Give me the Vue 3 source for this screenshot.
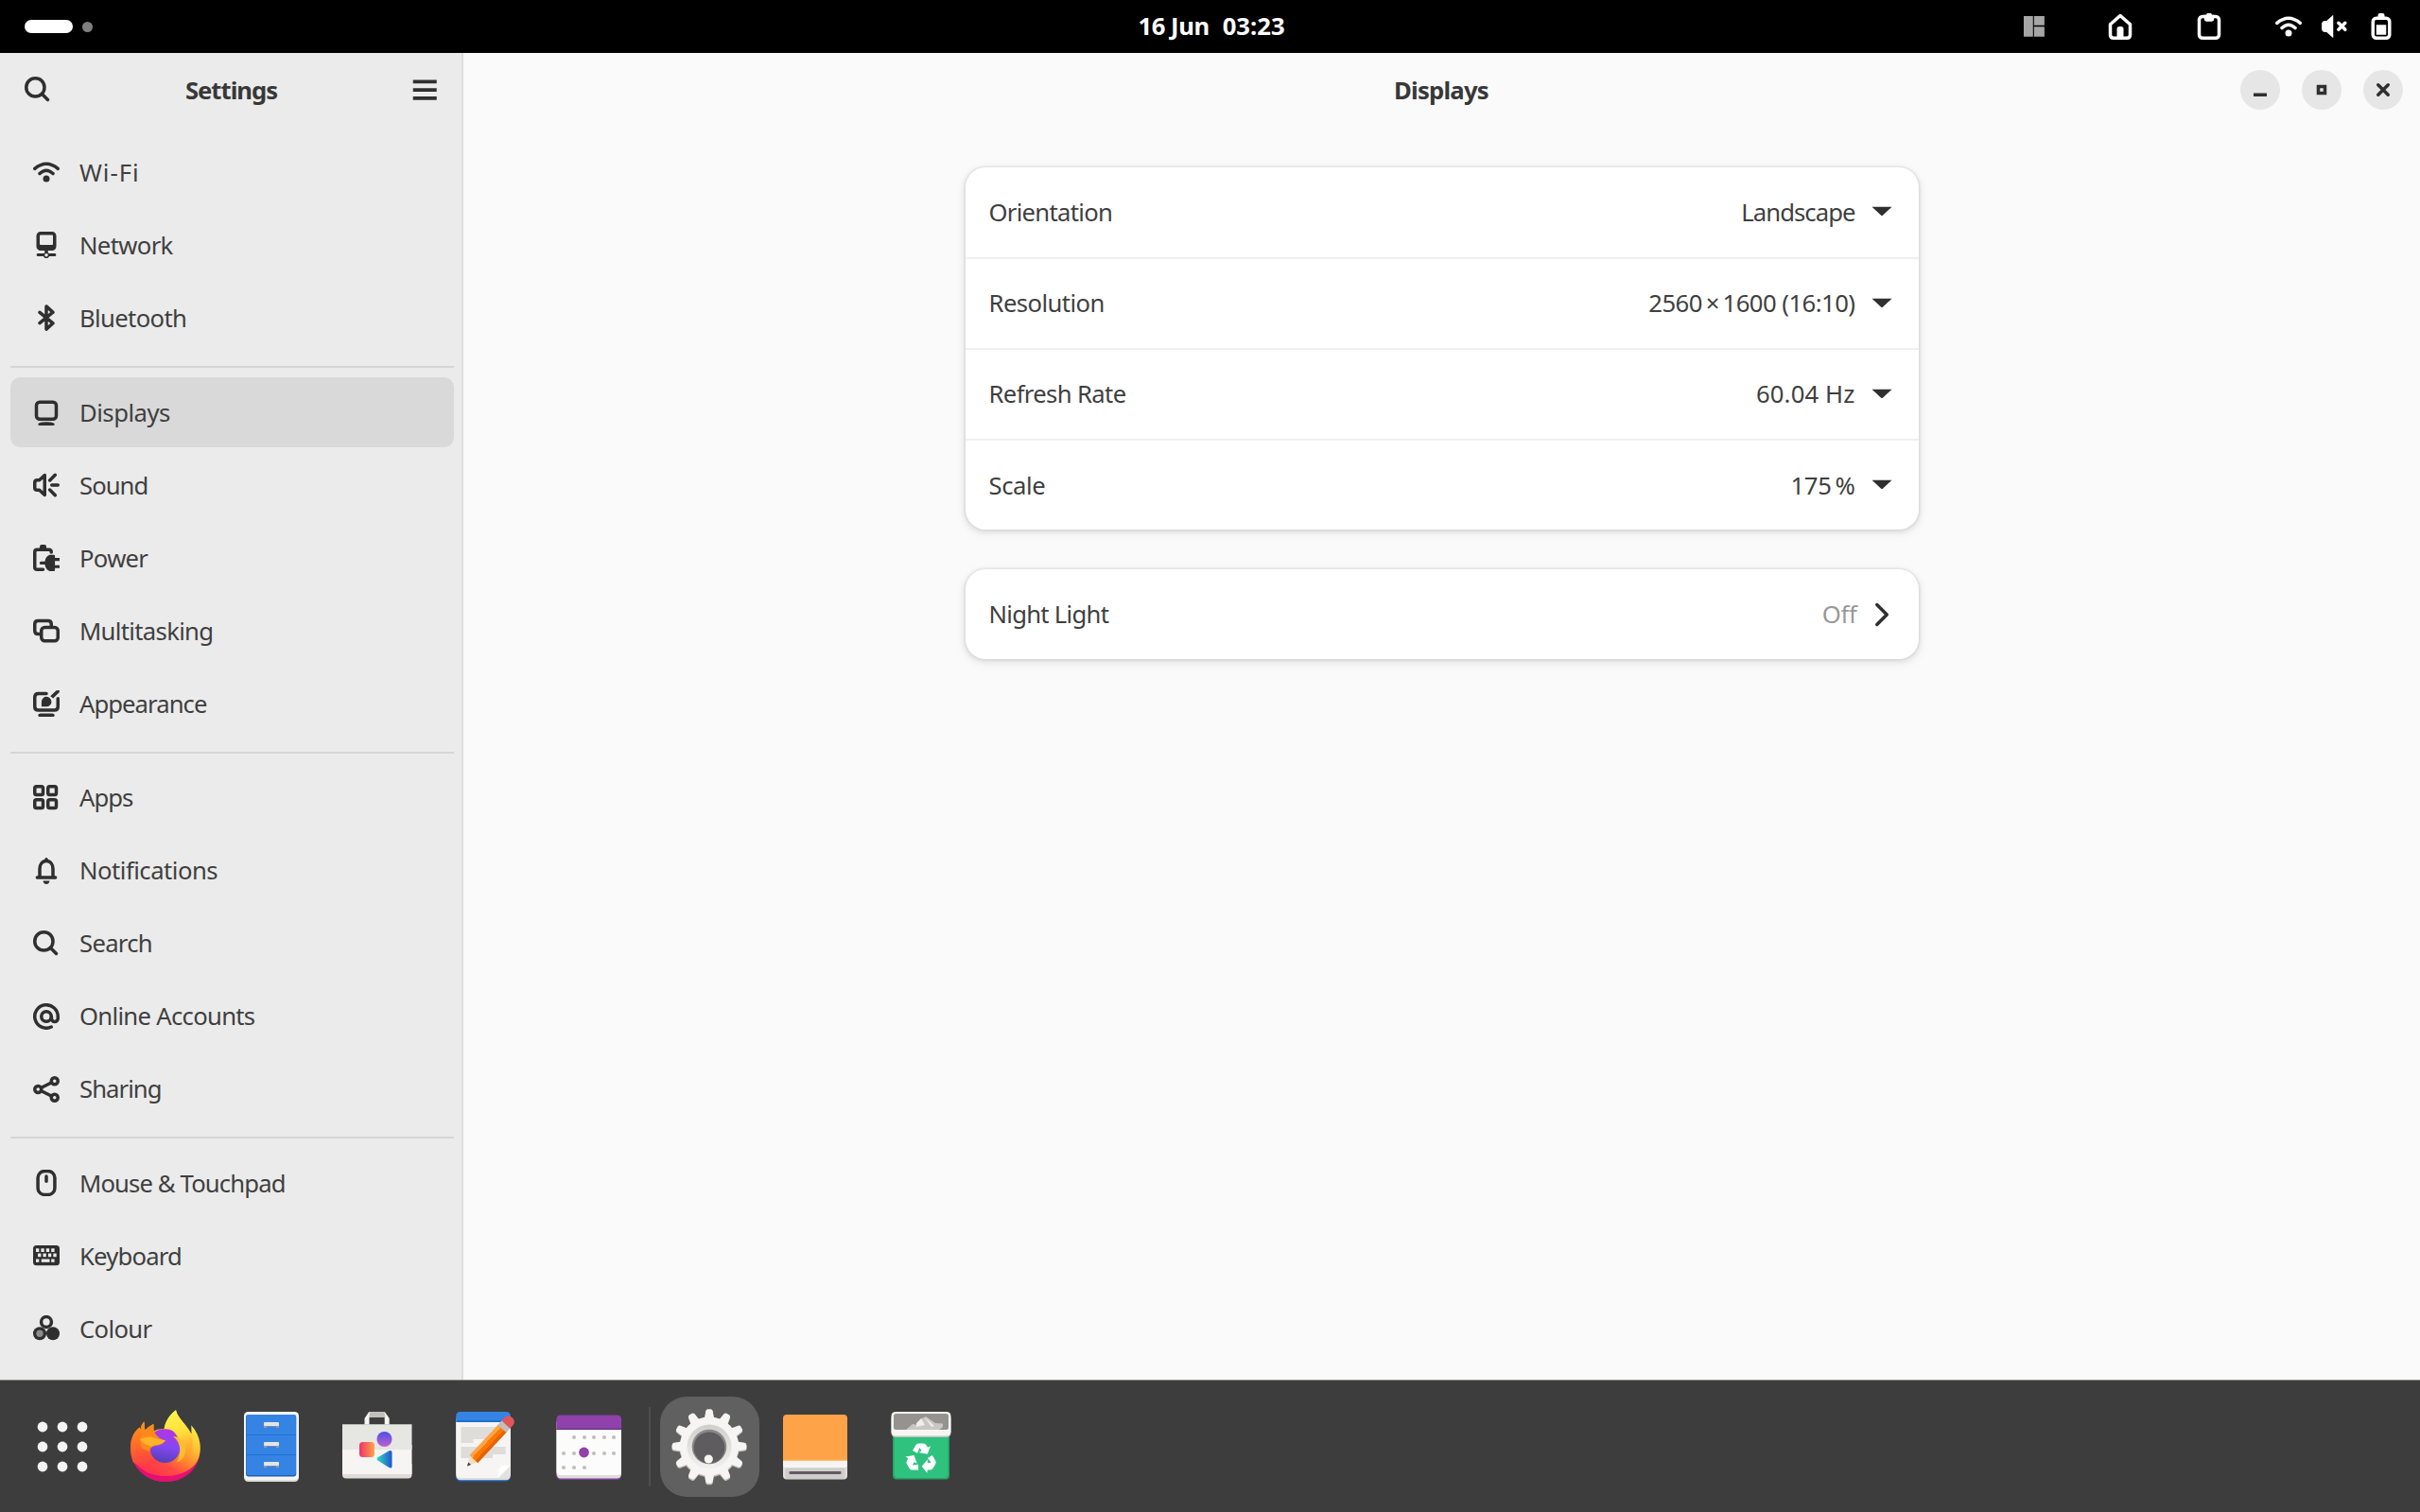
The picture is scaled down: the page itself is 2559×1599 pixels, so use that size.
<script setup>
// "ls" is the tracking, in px, of each label
const groups = [
  [
    { name: 'Wi-Fi', icon: 'wifi', ls: 1 },
    { name: 'Network', icon: 'network', ls: -0.65 },
    { name: 'Bluetooth', icon: 'bluetooth', ls: -0.65 },
  ],
  [
    { name: 'Displays', icon: 'display', ls: -0.5, active: true },
    { name: 'Sound', icon: 'sound', ls: -0.95 },
    { name: 'Power', icon: 'power', ls: -0.7 },
    { name: 'Multitasking', icon: 'multitasking', ls: -0.68 },
    { name: 'Appearance', icon: 'appearance', ls: -0.95 },
  ],
  [
    { name: 'Apps', icon: 'apps', ls: -0.95 },
    { name: 'Notifications', icon: 'bell', ls: -0.5 },
    { name: 'Search', icon: 'search', ls: -0.7 },
    { name: 'Online Accounts', icon: 'at', ls: -0.7 },
    { name: 'Sharing', icon: 'share', ls: -0.95 },
  ],
  [
    { name: 'Mouse & Touchpad', icon: 'mouse', ls: -0.87 },
    { name: 'Keyboard', icon: 'keyboard', ls: -0.8 },
    { name: 'Colour', icon: 'colour', ls: -0.65 },
  ],
]

const rows = [
  { label: 'Orientation', ls: -0.72, value: 'Landscape', vls: -0.95 },
  { label: 'Resolution', ls: -0.56, value: '2560\u2009×\u20091600 (16:10)', vls: -0.53 },
  { label: 'Refresh Rate', ls: -0.64, value: '60.04 Hz', vls: 0.15 },
  { label: 'Scale', ls: -0.4, value: '175\u2009%', vls: -0.3 },
]

const teeth = Array.from({ length: 12 }, (_, i) => i * 30)
const keys = [
  [1.7, 3.6], [4.8, 3.6], [7.9, 3.6], [11, 3.6],
  [2.9, 6.6], [6, 6.6], [9.1, 6.6], [12.2, 6.6],
]
const calDots = [
  [31, 31], [42, 31], [52, 31], [63, 31], [73, 31],
  [20, 48], [31, 48], [52, 48], [63, 48], [73, 48],
  [20, 63], [31, 63], [42, 63],
]
</script>

<template>
  <div class="desktop">
    <!-- shared symbolic icons -->
    <svg class="defs" width="0" height="0">
      <defs>
        <symbol id="wifi" viewBox="0 0 16 16">
          <path class="s" d="M1 5.9Q8 .1 15 5.9M4 8.9Q8 5.1 12 8.9" />
          <circle cx="8" cy="12" r="2" />
        </symbol>
        <symbol id="network" viewBox="0 0 16 16">
          <path fill-rule="evenodd" d="M4.5 0h7A2.5 2.5 0 0 1 14 2.5v6.4a2.5 2.5 0 0 1-2.5 2.5H9v1.4a1.7 1.7 0 0 1 .7.4h3.6a.9.9 0 0 1 0 1.7H9.7a1.8 1.8 0 0 1-3.4 0H2.7a.9.9 0 0 1 0-1.7h3.6a1.7 1.7 0 0 1 .7-.4v-1.4H4.5A2.5 2.5 0 0 1 2 8.9V2.5A2.5 2.5 0 0 1 4.5 0zM4.6 2a.6.6 0 0 0-.6.6v4.8c0 .4.2.6.6.6h6.8c.4 0 .6-.2.6-.6V2.6a.6.6 0 0 0-.6-.6zM8 13.2a1 1 0 1 0 0 2 1 1 0 0 0 0-2z" />
        </symbol>
        <symbol id="bluetooth" viewBox="0 0 16 16">
          <path class="s" d="M4 4.8l8 6.5L8 14.9V1.1l4 3.6-8 6.5" />
        </symbol>
        <symbol id="display" viewBox="0 0 16 16">
          <rect class="s" x="2" y="1.9" width="12" height="10.3" rx="2" />
          <path d="M3 15.2C3 14.3 5 13.8 8 13.8s5 .5 5 1.4c0 .5-.3.8-.8.8H3.8c-.5 0-.8-.3-.8-.8z" />
        </symbol>
        <symbol id="sound" viewBox="0 0 16 16">
          <path class="s" d="M1 6.5Q1 5 2.5 5H3.8L7 2v12L3.8 11H2.5Q1 11 1 9.5z" />
          <path class="s" d="M10.1 5.1l3.2-3.2M11.3 8H15M10.1 10.9l3.2 3.2" />
        </symbol>
        <symbol id="power" viewBox="0 0 16 16">
          <path class="s" d="M11 4.6Q11 3 9.5 3h-7Q1 3 1 4.5v9Q1 15 2.5 15H6" />
          <path d="M4 2.5V1.2Q4 0 5.2 0h1.7Q8 0 8 1.2v1.3zM10 6.2h2.500q.7 0 .7.700V8H16v1.800h-2.800v2.600H16v1.800h-2.800v1.100q0 .7-.7.700H10Q7.600 15 7.100 12H4.800a.9.900 0 0 1 0-1.800h2.300Q7.600 7 10 6.200z" />
        </symbol>
        <symbol id="multitasking" viewBox="0 0 16 16">
          <rect class="s" x="5" y="6" width="10" height="8.200" rx="2" />
          <path class="s" d="M4 10H3Q1 10 1 8V4Q1 2 3 2h6Q11 2 11 4v1" />
        </symbol>
        <symbol id="appearance" viewBox="0 0 16 16">
          <path class="s" d="M8 2H3.200Q1 2 1 4.200v5.600Q1 12 3.200 12h9.600q2.200 0 2.200-2.200V5" />
          <path d="M5.100 9.900V6.800a3 3 0 1 1 3 3.100zM10.400 3.600L14 .2 16 0l-.1 1.200-3.800 3.600zM3 15.200c0-.9 1-1.200 1.800-1.200h6.400c.8 0 1.800.3 1.800 1.200 0 .5-.3.800-.8.800H3.800c-.5 0-.8-.3-.8-.8z" />
        </symbol>
        <symbol id="apps" viewBox="0 0 16 16">
          <rect class="s" x="1" y="1" width="5" height="5" rx="1" />
          <rect class="s" x="9" y="1" width="5" height="5" rx="1" />
          <rect class="s" x="1" y="9" width="5" height="5" rx="1" />
          <rect class="s" x="9" y="9" width="5" height="5" rx="1" />
        </symbol>
        <symbol id="bell" viewBox="0 0 16 16">
          <path class="s" d="M2.500 12h11M4 12V6.800C4 4.200 5.500 2 8 2s4 2.200 4 4.800V12" />
          <path d="M6.500 2.500L7 .8Q8-.7 9 .8l.5 1.700zM6 14h4q-.4 2-2 2t-2-2z" />
        </symbol>
        <symbol id="search" viewBox="0 0 16 16">
          <circle class="s" cx="6.500" cy="6.500" r="5.500" />
          <path class="s" d="M10.600 10.600L14 14" />
        </symbol>
        <symbol id="at" viewBox="0 0 16 16">
          <circle class="s" cx="8" cy="8" r="3" />
          <path class="s" d="M11 14.300A7 7 0 1 1 15 8v1.200a1.900 1.900 0 0 1-3.900 0V8" />
        </symbol>
        <symbol id="share" viewBox="0 0 16 16">
          <circle class="s" cx="3" cy="8" r="2" />
          <circle class="s" cx="13" cy="3" r="2" />
          <circle class="s" cx="13" cy="13" r="2" />
          <path class="s" d="M5 7l6-3M5 9l6 3" />
        </symbol>
        <symbol id="mouse" viewBox="0 0 16 16">
          <rect class="s" x="2.900" y=".9" width="10.200" height="14.200" rx="4" />
          <rect x="7" y="3" width="2" height="5" rx="1" />
        </symbol>
        <symbol id="keyboard" viewBox="0 0 16 16">
          <rect y="1.700" width="16" height="12.200" rx="2" />
          <g class="paper">
            <rect v-for="k in keys" :key="k.join()" :x="k[0]" :y="k[1]" width="1.900" height="2.100" />
            <rect x="1.700" y="10" width="1.900" height="1.900" />
            <rect x="5" y="10" width="5" height="1.900" />
            <rect x="11" y="10" width="1.900" height="1.900" />
          </g>
        </symbol>
        <symbol id="colour" viewBox="0 0 16 16">
          <circle class="s" cx="8" cy="4" r="3.100" />
          <circle cx="4" cy="11" r="4" />
          <circle cx="12" cy="11" r="4" />
          <circle cx="4" cy="11" r="2.100" fill="#8d8d8d" />
        </symbol>
      </defs>
    </svg>

    <header class="topbar">
      <div class="workspaces"><i class="pill"></i><i class="dot"></i></div>
      <div class="clock"><span class="day">16 Jun</span><span>03:23</span></div>
      <div class="tray">
        <svg class="ic tile" viewBox="0 0 16 16"><path fill="#a6a6a6" d="M1.700 1.700h5.600v12.500H1.700zM7.900 1.700h6.300v5.600H7.900zM7.900 8.100h6.300v6.100H7.900z" /></svg>
        <svg class="ic home" viewBox="0 0 16 16"><path class="s" d="M2 6.700L8 1.400l6 5.300V13q0 2-2 2H4q-2 0-2-2z" /><path d="M6 15.500V9.600Q6 8 7.600 8h.8Q10 8 10 9.600v5.900z" /></svg>
        <svg class="ic clip" viewBox="0 0 16 16"><rect class="s" x="2" y="2" width="12" height="13" rx="2" /><path d="M5 1h1.200L6.800 0h2.400L9.800 1H11v2.600Q11 5 9.600 5H6.400Q5 5 5 3.600z" /></svg>
        <svg class="ic wi"><use href="#wifi" /></svg>
        <svg class="ic mute" viewBox="0 0 16 16"><path d="M0 7Q0 4.600 2.200 4.600H3L7 1v14l-4-3.600h-.8Q0 11.400 0 9z" /><path class="s" d="M10.200 5.900l4 4M14.200 5.900l-4 4" /></svg>
        <svg class="ic" viewBox="0 0 16 16"><rect class="s" x="3" y="3" width="10" height="12" rx="2" /><path d="M6 2.500V1.200Q6 0 7.200 0h1.600Q10 0 10 1.200v1.300zM5 7h6v6H5z" /></svg>
      </div>
    </header>

    <div class="window">
      <aside class="sidebar">
        <div class="bar">
          <svg class="ic"><use href="#search" /></svg>
          <h1 class="title st">Settings</h1>
          <svg class="ic" viewBox="0 0 16 16"><path d="M1 2h14.300v2.100H1zM1 7h14.300v2.100H1zM1 12h14.300v2.100H1z" /></svg>
        </div>
        <nav>
          <ul v-for="(g, i) in groups" :key="i">
            <li v-for="it in g" :key="it.name" :class="{ active: it.active }">
              <svg class="ic"><use :href="'#' + it.icon" /></svg>
              <span :style="{ letterSpacing: it.ls + 'px' }">{{ it.name }}</span>
            </li>
          </ul>
        </nav>
      </aside>

      <main>
        <div class="bar">
          <h1 class="title dt">Displays</h1>
          <div class="controls">
            <button><svg class="ic" viewBox="0 0 16 16"><path d="M4 10h8v2H4z" /></svg></button>
            <button><svg class="ic" viewBox="0 0 16 16"><path fill-rule="evenodd" d="M5 5h6v6H5zM7 7v2h2V7z" /></svg></button>
            <button><svg class="ic" viewBox="0 0 16 16"><path class="s" d="M5 5l6 6M11 5l-6 6" /></svg></button>
          </div>
        </div>
        <div class="content">
          <section class="card">
            <div v-for="r in rows" :key="r.label" class="row">
              <span :style="{ letterSpacing: r.ls + 'px' }">{{ r.label }}</span>
              <span class="value" :style="{ letterSpacing: r.vls + 'px' }">{{ r.value }}</span>
              <svg class="ic" viewBox="0 0 16 16"><path d="M2 5h12L8.500 10.200q-.5.400-1 0z" /></svg>
            </div>
          </section>
          <section class="card">
            <div class="row">
              <span class="nl">Night Light</span>
              <span class="value off">Off</span>
              <svg class="ic" viewBox="0 0 16 16"><path class="s" d="M5 2l6 6-6 6" /></svg>
            </div>
          </section>
        </div>
      </main>
    </div>

    <footer class="dock">
      <svg class="app grid" viewBox="0 0 84 84">
        <g fill="#f4f4f4">
          <template v-for="y in [21, 42, 63]" :key="y"><circle v-for="x in [21, 42, 63]" :key="x" :cx="x" :cy="y" r="5.400" /></template>
        </g>
      </svg>

      <svg class="app" viewBox="0 0 84 84">
        <defs>
          <linearGradient id="ffBody" x1=".82" y1=".15" x2=".3" y2=".95">
            <stop offset="0" stop-color="#fff14a" /><stop offset=".28" stop-color="#ffc233" /><stop offset=".5" stop-color="#ff8a2e" /><stop offset=".72" stop-color="#ff4a42" /><stop offset="1" stop-color="#ff3050" />
          </linearGradient>
          <linearGradient id="ffFlame" x1=".3" y1="0" x2=".5" y2="1">
            <stop offset="0" stop-color="#fff44f" /><stop offset=".45" stop-color="#ffe03c" /><stop offset=".75" stop-color="#ffb030" /><stop offset="1" stop-color="#ff8a2e" stop-opacity="0" />
          </linearGradient>
          <linearGradient id="ffFace" x1=".2" y1="0" x2=".3" y2="1">
            <stop offset="0" stop-color="#ff9a14" /><stop offset=".45" stop-color="#ff7224" /><stop offset="1" stop-color="#ff3c46" />
          </linearGradient>
          <linearGradient id="ffGlobe" x1=".6" y1="0" x2=".4" y2="1">
            <stop offset="0" stop-color="#b833e1" /><stop offset=".5" stop-color="#8547f5" /><stop offset="1" stop-color="#5340b4" />
          </linearGradient>
        </defs>
        <path fill="url(#ffBody)" d="M19.300 15.300L20.300 24.500Q24 20.500 29.300 18l.3 7.500Q34 22.500 40.500 23.500C42 14 47 8 53 3.300 55 12 64 18 69.500 28.500L69.300 19.300C76 27 78.800 35 78.800 43.500 78.800 63 62.500 79 42 79S5 63 5 43.500C5 34 8 27 14.500 21.500q.7 1 .8 2.500Q16 19 19.300 15.300z" />
        <path fill="url(#ffFlame)" d="M40.500 23.500C42 14 47 8 53 3.300 55 12 64 18 69 29 73 41 69 54 61 60L56 54 58 36z" />
        <path fill="#e2077a" opacity=".85" d="M5.500 50C10 64 24 73 42 73s31-8 35.800-20C74 69 60 79 42 79S9 67 5.500 50z" />
        <path fill="url(#ffFace)" d="M19.300 15.300L20.300 24.500Q24 20.500 29.300 18l.3 7.500 6 4L32 59Q20 68 7.500 58 5 51 5 43.500C5 34 8 27 14.500 21.500q.7 1 .8 2.500Q16 19 19.300 15.300z" />
        <path fill="url(#ffGlobe)" d="M27.500 31C29.500 26 35 23.300 42 23.300 48.500 23.300 52 26.500 54 30.500 56.500 34 57.600 38 57.600 42.500 57.600 52 50.500 59 41.500 59S25.500 52 25.500 43z" />
        <path fill="#ffbd30" d="M50 31.500C57 30 62 38 63 45 63 53 59 57 53.500 58.500 57.600 53 58.500 46 56.500 40.500 55 36 53.500 33.500 50 31.500z" />
        <path fill="#ff8a1c" d="M19.500 24L29.600 25.500C32 30 36 34.500 42 35.300 40 39 36 40.300 31 41 27.500 42 25.500 43.500 25.500 47L17 44 14.700 34.300z" />
        <path fill="#ffb42a" d="M14.700 34.300Q24 30 29.600 32.500 36 34.500 42 35.300 40 38.500 35 39.500 30 40 27.500 41.500 20 40.500 14.700 34.300z" />
      </svg>

      <svg class="app" viewBox="0 0 84 84">
        <rect x="13" y="8" width="58" height="71" rx="4.500" fill="#deddda" />
        <rect x="13" y="5" width="58" height="72" rx="4.500" fill="#f6f5f4" />
        <rect x="15" y="8" width="53.300" height="65.500" rx="3" fill="#1a5fb4" />
        <rect x="15.400" y="8" width="52.500" height="64" rx="2.500" fill="#3584e4" />
        <path fill="#1c71d8" d="M15.400 29h52.500v1H15.400zM15.400 50h52.500v1H15.400z" />
        <g v-for="y in [16, 37, 58]" :key="y">
          <path fill="#9a9996" :d="`M34 ${y + 3}h16v3h-3v-1.500H37v1.500h-3z`" />
          <rect x="34" :y="y" width="16" height="4" rx="1" fill="#e6e5e3" />
        </g>
      </svg>

      <svg class="app" viewBox="0 0 84 84">
        <defs>
          <linearGradient id="swR"><stop offset="0" stop-color="#ed336b" /><stop offset="1" stop-color="#ffa348" /></linearGradient>
          <linearGradient id="swP" x2="0" y2="1"><stop offset="0" stop-color="#4a4fe8" /><stop offset="1" stop-color="#c061cb" /></linearGradient>
          <linearGradient id="swT"><stop offset="0" stop-color="#33d7bf" /><stop offset="1" stop-color="#1f56d0" /></linearGradient>
        </defs>
        <path fill="#f6f5f4" d="M28.500 18.500V12L33 5.300h17L54.700 12v6.500h-5V11H33.500v7.500z" />
        <path fill="#c0bfbc" d="M34 5.300h15.500l.7 5.700H33.500z" />
        <path fill="#deddda" d="M5 60h73.500v11.500q0 4-4 4H9q-4 0-4-4z" />
        <path fill="#f6f5f4" d="M5 40h73.500v31H5z" />
        <path fill="#e6e6e2" d="M5 18.300h73.500V45H5z" />
        <rect x="23" y="37" width="16" height="16" rx="3.500" fill="url(#swR)" />
        <circle cx="49.500" cy="34" r="8" fill="url(#swP)" />
        <path fill="url(#swT)" d="M42 53.500Q41 55 42 56.300L54.500 64q3 1.300 3-1.500V48q0-2.800-3-1.700z" />
      </svg>

      <svg class="app" viewBox="0 0 84 84">
        <defs><linearGradient id="pen" x1="0" y1="0" x2="1" y2="0"><stop offset=".33" stop-color="#ffa348" /><stop offset=".33" stop-color="#ff7800" /><stop offset=".7" stop-color="#ff7800" /><stop offset=".7" stop-color="#e66100" /></linearGradient></defs>
        <rect x="13.300" y="10" width="57.500" height="68.700" rx="4.500" fill="#1a5fb4" />
        <rect x="13.300" y="9" width="57.500" height="68.300" rx="4.500" fill="#deddda" />
        <path fill="#f6f5f4" d="M13.300 15h57.500v55q0 5-4 5h-49.500q-4 0-4-5z" />
        <path fill="#3584e4" d="M17.800 5h48.500q4.500 0 4.500 4.500V14.500H13.300V9.500Q13.300 5 17.800 5z" />
        <path fill="#1c71d8" d="M13.300 14h57.500v2H13.300z" />
        <path fill="#deddda" d="M18.500 21h42v13h-29v4h-13zM18.500 42H65.500v8H52v4H18.500z" />
        <path fill="#fff" d="M58 75q-.5-12 5-13h7.800z" /><path fill="#e3e2e0" d="M70.800 62L58 75h9q3.800-.5 3.800-5z" />
        <g transform="translate(25 62.500) rotate(43)">
          <path fill="#3d3846" d="M-2 -4L0 0 2 -4z" /><path fill="#f0e0c0" d="M-5.500 -11L-1.900 -4h3.800L5.500 -11z" />
          <rect x="-6" y="-56" width="12" height="46" fill="url(#pen)" />
          <rect x="-6" y="-61" width="12" height="7" fill="#c0bfbc" />
          <path fill="#e2555a" d="M-6 -60v-4q0-6 6-6t6 6v4z" />
        </g>
      </svg>

      <svg class="app" viewBox="0 0 84 84">
        <rect x="7.500" y="12" width="68.500" height="65" rx="4.500" fill="#813d9c" />
        <rect x="7.500" y="12" width="68.500" height="63.500" rx="4.500" fill="#deddda" />
        <path fill="#fcfcfc" d="M7.500 24h68.500v44q0 4-4 4H11.500q-4 0-4-4z" />
        <path fill="#9141ac" d="M12 8.500h59.500q4.500 0 4.500 4.500v10.500H7.500V13q0-4.500 4.500-4.500z" />
        <path fill="#613583" d="M7.500 22.700h68.500V24H7.500z" />
        <circle v-for="d in calDots" :key="d.join()" :cx="d[0] - 5" :cy="d[1] + 1" r="2.100" fill="#c0bfbc" />
        <circle cx="36.500" cy="48" r="5.400" fill="#9141ac" />
      </svg>

      <i class="sep"></i>

      <div class="app running">
        <svg viewBox="0 0 84 84">
          <defs><linearGradient id="rim" x2="0" y2="1"><stop offset="0" stop-color="#d0cfcc" /><stop offset="1" stop-color="#f2f1f0" /></linearGradient></defs>
          <g fill="#c0bfbc" transform="translate(0 1.200)">
            <path v-for="a in teeth" :key="a" :transform="`rotate(${a} 42 41.500)`" d="M37 12l1.300-8q.4-2 2.200-2h3q1.800 0 2.200 2L47 12z" />
            <circle cx="42" cy="41.500" r="31.500" />
          </g>
          <g fill="#f6f5f4">
            <path v-for="a in teeth" :key="a" :transform="`rotate(${a} 42 41.500)`" d="M37 12l1.300-7.800q.4-2 2.200-2h3q1.800 0 2.200 2L47 12z" />
            <circle cx="42" cy="41.500" r="31" />
          </g>
          <circle cx="42" cy="42" r="23.500" fill="url(#rim)" />
          <circle cx="42" cy="42" r="18.300" fill="#8a8986" />
          <circle cx="42" cy="43" r="16.500" fill="#5e5c5e" />
          <circle cx="41.300" cy="55" r="4.600" fill="#f6f5f4" />
        </svg>
      </div>

      <svg class="app" viewBox="0 0 84 84">
        <rect x="8" y="50" width="68" height="26.500" rx="4" fill="#deddda" />
        <path fill="#f6f5f4" d="M8 55h68v7q0 2-2 2H10q-2 0-2-2z" />
        <rect x="10.500" y="64.500" width="63" height="11.500" rx="2" fill="#cfcecb" />
        <path fill="#ffa348" d="M12 8h60q4 0 4 4v45H8V12q0-4 4-4z" />
        <path fill="#ffbe6f" d="M8 55.800h68V57H8z" />
        <rect x="14.500" y="68" width="55" height="3" rx="1" fill="#5e5c64" />
      </svg>

      <svg class="app" viewBox="0 0 84 84">
        <path fill="#26a269" d="M12 26h60v46q0 4.500-4 4.500H16q-4 0-4-4.500z" />
        <path fill="#2ec27e" d="M13.500 26h57v45q0 4-4 4h-49q-4 0-4-4z" />
        <rect x="10.500" y="8" width="63" height="24" rx="4.500" fill="#c0bfbc" />
        <rect x="10.500" y="5" width="63" height="25.500" rx="4.500" fill="#f6f5f4" />
        <rect x="13" y="7" width="58" height="17" rx="2.500" fill="#949390" />
        <path fill="#c8c7c4" d="M26 24l7-6 5 1 3-6 6-3 10 7 8 .5V21l-4 3z" /><path fill="#efeeed" d="M37 17l5-5 4 7-9 2zM46 11l10 9-3 1z" />
        <g fill="#fff">
          <g v-for="a in [0, 120, 240]" :key="a" :transform="`translate(0 -.5) rotate(${a} 42 55)`">
            <path d="M33 46.500L36.500 40.500Q37.300 39 39.300 39L44.500 39Q46.500 39 47.500 40.700L49 43.200L52 41.800L48.700 50.300L39.500 48.600L42.500 46.800L40.500 43.600L38 49.300z" />
          </g>
        </g>
      </svg>
    </footer>
  </div>
</template>

<style>
body { margin: 0; background: #3d3d3d; }
</style>

<style scoped>
.desktop {
  width: 2559px;
  height: 1599px;
  overflow: hidden;
  display: flex;
  flex-direction: column;
  font: 25.67px/36px "Noto Sans", "Open Sans", sans-serif;
  color: #3f3f3f;
}
.defs { position: absolute; }
.ic { width: 28px; height: 28px; flex: none; display: block; fill: #2f2f2f; stroke: none; --ink: #2f2f2f; }
.s { fill: none; stroke: var(--ink); stroke-width: 2; stroke-linecap: round; stroke-linejoin: round; }
.paper { fill: #ebebeb; }

.topbar {
  height: 56px;
  flex: none;
  background: #000;
  color: #fff;
  display: grid;
  grid-template-columns: 1fr auto 1fr;
  align-items: center;
}
.workspaces { display: flex; align-items: center; gap: 10px; padding-left: 26px; }
.pill { width: 51px; height: 14px; border-radius: 7px; background: #fff; }
.dot { width: 11px; height: 11px; border-radius: 50%; background: #808080; }
.clock { display: flex; font-weight: 700; padding: 0 0 0 3px; }
.clock .day { letter-spacing: -.44px; margin-right: 14px; }
.tray { display: flex; justify-content: flex-end; padding-right: 27px; }
.tray .ic { fill: #fff; --ink: #fff; }
.tile { margin-right: 63px; }
.home { margin-right: 66.5px; }
.clip { margin-right: 56px; }
.wi { margin-right: 21px; }
.mute { margin-right: 21px; }

.window { flex: none; height: 1403px; display: flex; border-bottom: 1px solid #8b8c74; }
.sidebar { width: 488px; border-right: 2px solid #dedede; background: #ebebeb; overflow: hidden; }
.bar { height: 78px; display: flex; align-items: center; }
.sidebar .bar { justify-content: space-between; padding: 0 25px 0 26px; }
.title { margin: 0; font-size: 25.67px; font-weight: 700; line-height: 36px; color: #383838; }
.st { letter-spacing: -1px; padding-top: 1px; }
.dt { letter-spacing: -.79px; padding-top: 2px; }
nav { padding: 11.7px 8.5px 0 10.5px; }
ul { list-style: none; margin: 0; padding: 0; display: flex; flex-direction: column; gap: 3.5px; }
ul + ul { margin-top: 13.9px; border-top: 2px solid #d5d5d5; padding-top: 10.2px; }
li { height: 73.5px; display: flex; align-items: center; gap: 21px; padding-left: 24.5px; border-radius: 10.5px; }
li span { padding-top: 1px; white-space: nowrap; }
.active { background: #d9d9d9; }

main { flex: 1; background: #fafafa; }
main .bar { display: grid; grid-template-columns: 1fr auto 1fr; padding: 0 18px 0 17px; }
main .bar .title { grid-column: 2; }
.controls { display: flex; justify-content: flex-end; gap: 23px; }
button { width: 42px; height: 42px; padding: 0; border: 0; border-radius: 50%; background: #e6e6e6; display: grid; place-items: center; }
.content { width: 1008px; margin: 43px auto 0; display: flex; flex-direction: column; gap: 42px; }
.card { background: #fff; border-radius: 21px; box-shadow: 0 0 0 1.75px rgba(0, 0, 0, .04), 0 1.75px 5px 1.75px rgba(0, 0, 0, .07), 0 3.5px 10.5px 3.5px rgba(0, 0, 0, .03); }
.row { height: 94.5px; display: flex; align-items: center; padding: 0 25px; }
.row span { padding-top: 1px; }
.row + .row { height: 94.25px; border-top: 2px solid #f0f0f0; }
.value { margin-left: auto; margin-right: 14px; }
.nl { letter-spacing: -.72px; }
.off { color: #989898; letter-spacing: -.3px; margin-right: 12px; }

.dock { flex: 1; background: #3d3d3d; display: flex; align-items: center; padding: 1px 0 0 10px; box-sizing: border-box; }
.app { width: 84px; height: 84px; margin: 0 14px; flex: none; }
.app.grid { margin-right: 10.5px; }
.sep { width: 2px; height: 84px; background: #4e4e4e; margin: 0 6.5px 0 7px; }
.running { width: 105px; height: 105.5px; margin: 0 3.5px; border-radius: 28px; background: #606060; display: grid; place-items: center; }
.running svg { width: 84px; height: 84px; }
</style>
